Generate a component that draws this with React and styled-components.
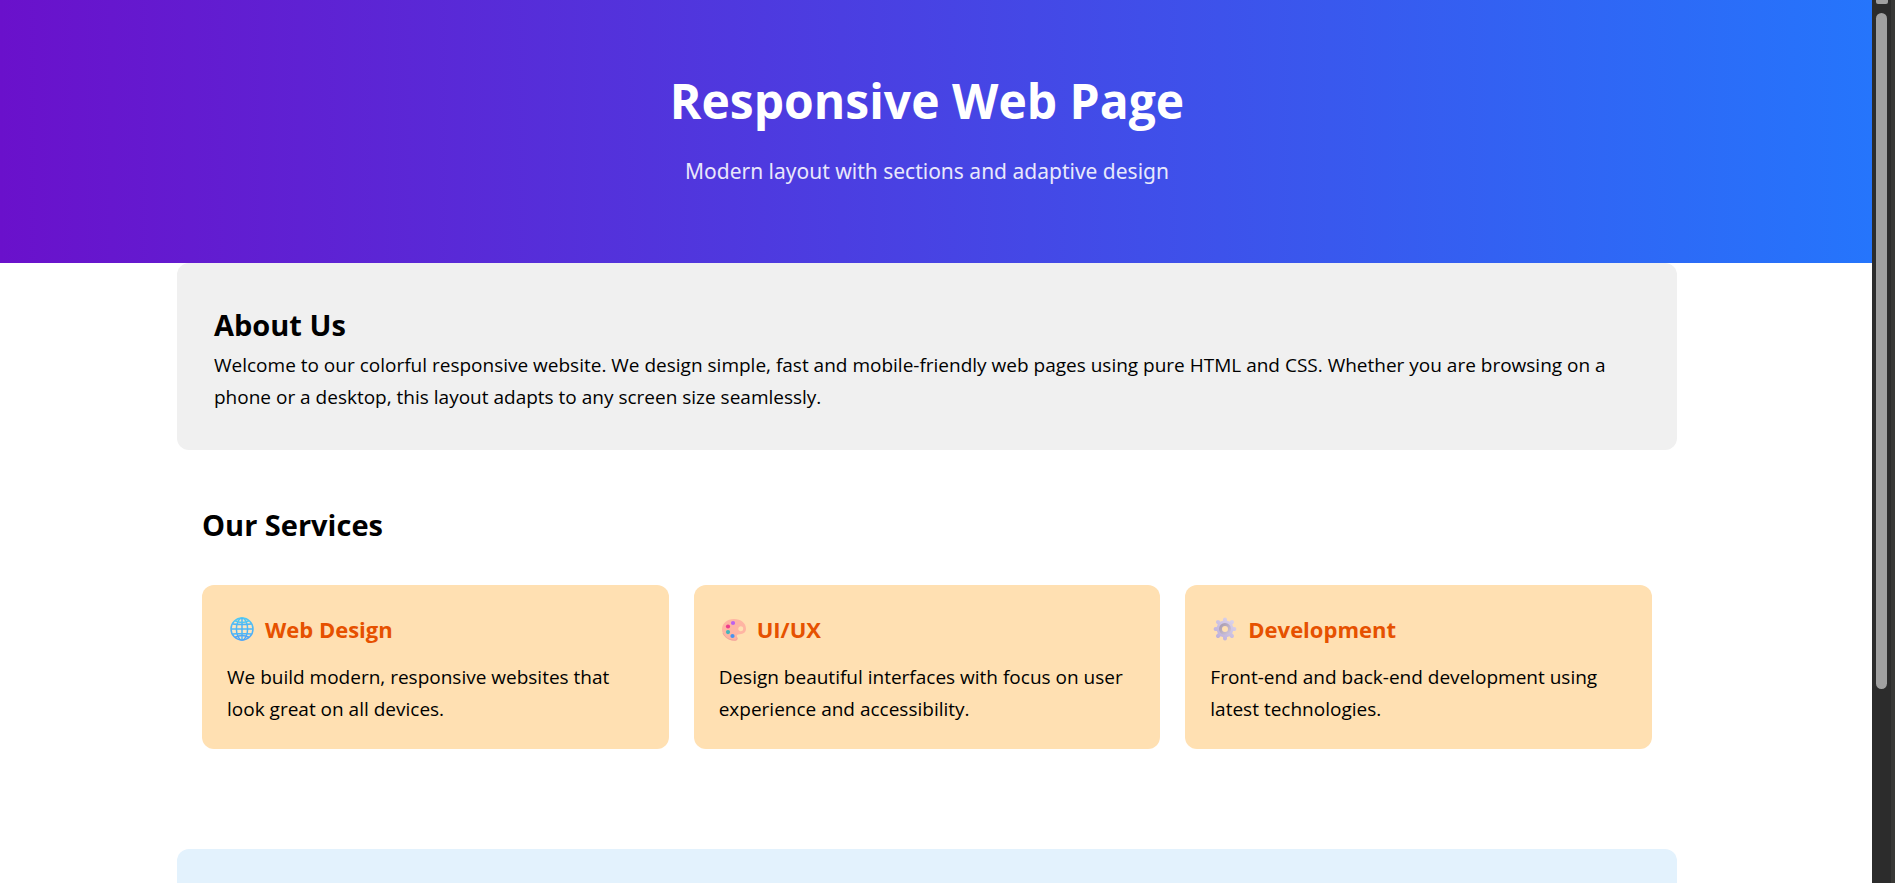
import React from "react";
import styled, { createGlobalStyle } from "styled-components";

const GlobalStyle = createGlobalStyle`
  * { box-sizing: border-box; margin: 0; padding: 0; }
  body {
    font-family: "Segoe UI", "Open Sans", "Noto Sans", sans-serif;
    font-size: 19px;
    line-height: 32px;
    color: #000;
    background: #fff;
  }
`;

const Viewport = styled.div`
  display: flex;
  height: 100vh;
  overflow: hidden;
`;

const Page = styled.div`
  flex: 1;
  min-width: 0;
`;

const Hero = styled.header`
  padding: 61px 18px 73px 0;
  text-align: center;
  color: #fff;
  background: linear-gradient(to right, #6a11cb, #2575fc);
`;

const HeroTitle = styled.h1`
  margin-bottom: 11px;
  font-size: 48px;
  line-height: 80px;
`;

const HeroText = styled.p`
  font-family: "Segoe UI", "Noto Sans", sans-serif;
  font-size: 21px;
  line-height: 38px;
  opacity: 0.88;
`;

const Main = styled.main`
  padding-right: 18px;
`;

const Container = styled.section`
  max-width: 1500px;
  margin: 0 auto;
`;

const About = styled(Container)`
  padding: 38px 37px 37px;
  border-radius: 12px;
  background: #f0f0f0;
`;

const Services = styled(Container)`
  padding: 51px 25px 100px;
`;

const Contact = styled(Container)`
  min-height: 200px;
  border-radius: 12px;
  background: #e3f2fd;
`;

const SectionTitle = styled.h2`
  font-size: 29px;
  line-height: 48px;
`;

const CardGrid = styled.div`
  display: grid;
  grid-template-columns: repeat(auto-fit, minmax(300px, 1fr));
  gap: 25px;
  margin-top: 36px;
`;

const Card = styled.article`
  padding: 25px 25px 24px;
  border-radius: 12px;
  background: #ffe0b2;
`;

const CardTitle = styled.h3`
  display: flex;
  align-items: center;
  gap: 11px;
  margin-bottom: 13px;
  padding-left: 3px;
  font-size: 22px;
  line-height: 38px;
  color: #e65100;
`;

const Icon = styled.svg`
  width: 24px;
  height: 24px;
  flex: none;
`;

const ScrollTrack = styled.div`
  width: 23px;
  flex: none;
  display: flex;
  flex-direction: column;
  gap: 9px;
  padding-left: 4px;
  background: #2c2c2c;
  border-right: 4px solid #383836;
`;

const ScrollArrow = styled.div`
  width: 12px;
  height: 4px;
  border-radius: 0 0 2px 2px;
  background: #a0a0a0;
`;

const ScrollThumb = styled.div`
  width: 11px;
  height: 676px;
  border-radius: 6px;
  background: #a0a0a0;
`;

const GlobeIcon = () => (
  <Icon viewBox="0 0 24 24" aria-hidden="true">
    <defs>
      <linearGradient id="globe" x1="0" y1="0" x2="0" y2="1">
        <stop offset="0" stopColor="#50c8f4" />
        <stop offset="1" stopColor="#4da4f8" />
      </linearGradient>
    </defs>
    <circle cx="12" cy="12" r="11.2" fill="#fbe5c0" />
    <g fill="none" stroke="url(#globe)" strokeWidth="1.5">
      <circle cx="12" cy="12" r="11" />
      <ellipse cx="12" cy="12" rx="5.6" ry="11" />
      <path d="M12 1 L12.01 23 M1 12 L23 12.01 M2.6 7 Q12 8 21.4 7 M2.6 17 Q12 16 21.4 17" stroke="#4db6f6" />
      <path d="M5 3.8 Q12 7 19 3.8 M5 20.2 Q12 17 19 20.2" />
    </g>
  </Icon>
);

const PaletteIcon = () => (
  <Icon viewBox="0 0 24 24" aria-hidden="true">
    <path
      fill="#ffb5a3"
      fillRule="evenodd"
      d="M12 2 C5 2 0 6.5 0 12.4 C0 18 5 23.3 12.5 23.7 C15.5 23.8 16.2 22 15.2 20.2 C14.2 18 15.2 17.2 17.5 17.2 C21.5 17.3 24 15.2 24 11.8 C24 6 19 2 12 2 Z M18.8 9.2 C20.6 9.2 21.4 10.4 21.2 12 C21 13.6 20 14.4 18.4 14.2 C16.8 14 16.2 13 16.3 11.6 C16.4 10.1 17.4 9.2 18.8 9.2 Z"
    />
    <path fill="none" stroke="#e99c9b" strokeWidth="0.7" d="M1 16.2 C3 20.8 7.5 23.2 13 23.2 C15 23.2 15.5 21.8 14.8 20.5" />
    <circle cx="11" cy="6" r="2.1" fill="#bb61ee" />
    <circle cx="6" cy="9.5" r="2.1" fill="#ee3c8d" />
    <circle cx="6" cy="15.1" r="2.1" fill="#45b5bb" />
    <circle cx="10.5" cy="19" r="2.1" fill="#4893ef" />
  </Icon>
);

const GearIcon = () => (
  <Icon viewBox="0 0 24 24" aria-hidden="true">
    <defs>
      <linearGradient id="gear" gradientUnits="userSpaceOnUse" x1="20" y1="2" x2="4" y2="22">
        <stop offset="0" stopColor="#dcd4ea" />
        <stop offset="1" stopColor="#bcaeda" />
      </linearGradient>
      <linearGradient id="hub" x1="0" y1="0" x2="1" y2="1">
        <stop offset="0" stopColor="#a99daf" />
        <stop offset="1" stopColor="#cdc2da" />
      </linearGradient>
    </defs>
    <g stroke="url(#gear)" strokeWidth="4" strokeLinecap="round">
      <path d="M12 2.6 L12.01 21.4 M2.6 12 L21.4 12.01 M5 5 L19 19 M19 5 L5 19" />
    </g>
    <circle cx="12" cy="12" r="8.4" fill="url(#gear)" />
    <circle cx="12" cy="12" r="4.5" fill="#ffe0b2" stroke="url(#hub)" strokeWidth="3" />
  </Icon>
);

const services = [
  {
    title: "Web Design",
    icon: GlobeIcon,
    text: "We build modern, responsive websites that look great on all devices.",
  },
  {
    title: "UI/UX",
    icon: PaletteIcon,
    text: "Design beautiful interfaces with focus on user experience and accessibility.",
  },
  {
    title: "Development",
    icon: GearIcon,
    text: "Front-end and back-end development using latest technologies.",
  },
];

export default function App() {
  return (
    <>
      <GlobalStyle />
      <Viewport>
        <Page>
          <Hero>
            <HeroTitle>Responsive Web Page</HeroTitle>
            <HeroText>Modern layout with sections and adaptive design</HeroText>
          </Hero>
          <Main>
            <About>
              <SectionTitle>About Us</SectionTitle>
              <p>
                Welcome to our colorful responsive website. We design simple, fast and mobile-friendly web
                pages using pure HTML and CSS. Whether you are browsing on a phone or a desktop, this layout
                adapts to any screen size seamlessly.
              </p>
            </About>
            <Services>
              <SectionTitle>Our Services</SectionTitle>
              <CardGrid>
                {services.map(({ title, icon: ServiceIcon, text }) => (
                  <Card key={title}>
                    <CardTitle>
                      <ServiceIcon />
                      {title}
                    </CardTitle>
                    <p>{text}</p>
                  </Card>
                ))}
              </CardGrid>
            </Services>
            <Contact />
          </Main>
        </Page>
        <ScrollTrack aria-hidden="true">
          <ScrollArrow />
          <ScrollThumb />
        </ScrollTrack>
      </Viewport>
    </>
  );
}
